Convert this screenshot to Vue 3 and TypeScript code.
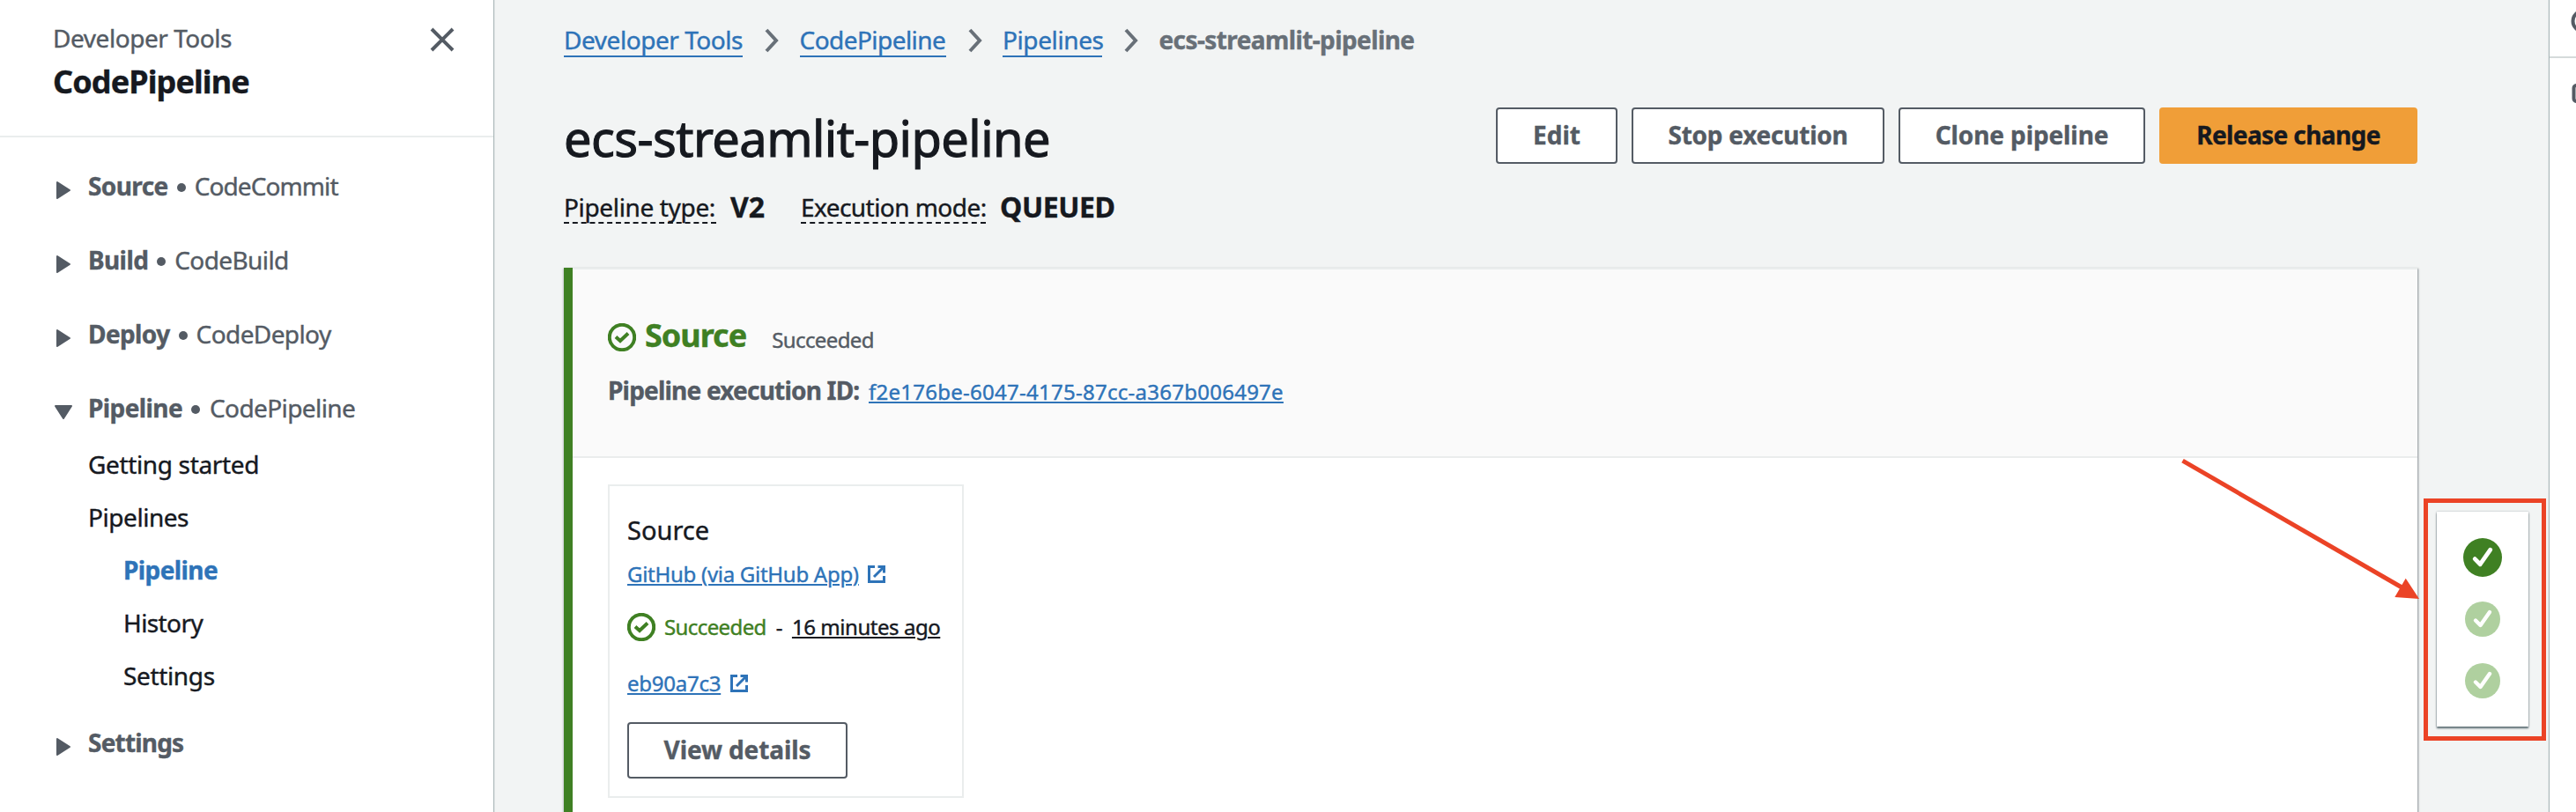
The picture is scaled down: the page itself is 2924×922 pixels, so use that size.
<script setup lang="ts">
interface Group { key: string; title: string; service: string }
interface Child { key: string; label: string; nested?: boolean; active?: boolean }

const groups: Group[] = [
  { key: 'source', title: 'Source', service: 'CodeCommit' },
  { key: 'build', title: 'Build', service: 'CodeBuild' },
  { key: 'deploy', title: 'Deploy', service: 'CodeDeploy' },
]
const children: Child[] = [
  { key: 'getting', label: 'Getting started' },
  { key: 'pipelines', label: 'Pipelines' },
  { key: 'pipeline', label: 'Pipeline', nested: true, active: true },
  { key: 'history', label: 'History', nested: true },
  { key: 'settings', label: 'Settings', nested: true },
]
const crumbs = [
  { key: 'tools', label: 'Developer Tools' },
  { key: 'cp', label: 'CodePipeline' },
  { key: 'list', label: 'Pipelines' },
]
const actions = [
  { key: 'edit', label: 'Edit' },
  { key: 'stop', label: 'Stop execution' },
  { key: 'clone', label: 'Clone pipeline' },
  { key: 'release', label: 'Release change' },
]
const stages = [
  { key: 'one', current: true },
  { key: 'two', current: false },
  { key: 'three', current: false },
]
</script>

<template>
  <div class="page">
    <aside class="sidebar">
      <header class="side-head">
        <div>
          <div class="side-sup">Developer Tools</div>
          <div class="side-title">CodePipeline</div>
        </div>
        <svg class="close" viewBox="0 0 28 28"><path d="M2 2L26 26M26 2L2 26" /></svg>
      </header>
      <nav class="nav">
        <div v-for="g in groups" :key="g.key" class="group" :class="'g-' + g.key">
          <svg class="tri" viewBox="0 0 24 24"><path d="M5 3L19 12L5 21Z" /></svg>
          <b>{{ g.title }}</b><i class="dot"></i><span>{{ g.service }}</span>
        </div>
        <div class="group g-pipe">
          <svg class="tri" viewBox="0 0 24 24"><path d="M3 5H21L12 19Z" /></svg>
          <b>Pipeline</b><i class="dot"></i><span>CodePipeline</span>
        </div>
        <div
          v-for="c in children"
          :key="c.key"
          class="child"
          :class="['c-' + c.key, { nested: c.nested, active: c.active }]"
        ><span>{{ c.label }}</span></div>
        <div class="group g-set">
          <svg class="tri" viewBox="0 0 24 24"><path d="M5 3L19 12L5 21Z" /></svg>
          <b>Settings</b>
        </div>
      </nav>
    </aside>

    <main class="main">
      <div class="crumbs">
        <template v-for="c in crumbs" :key="c.key">
          <a :class="'k-' + c.key">{{ c.label }}</a>
          <svg class="chev" viewBox="0 0 18 28"><path d="M3 2L14 14L3 26" /></svg>
        </template>
        <b class="k-here">ecs-streamlit-pipeline</b>
      </div>

      <div class="title-row">
        <h1>ecs-streamlit-pipeline</h1>
        <div class="actions">
          <button v-for="a in actions" :key="a.key" class="btn" :class="'b-' + a.key">{{ a.label }}</button>
        </div>
      </div>

      <div class="meta">
        <span class="term t-type">Pipeline type:</span><b class="v-type">V2</b>
        <span class="term t-mode">Execution mode:</span><b class="v-mode">QUEUED</b>
      </div>

      <section class="stage">
        <header class="stage-head">
          <div class="stage-title">
            <svg class="ok" viewBox="0 0 32 32"><circle cx="16" cy="16" r="14.2" /><path d="M9 15.5L14 20L23 11.5" /></svg>
            <h2>Source</h2>
            <span class="stage-status">Succeeded</span>
          </div>
          <div class="exec"><b>Pipeline execution ID:</b><a>f2e176be-6047-4175-87cc-a367b006497e</a></div>
        </header>
        <div class="stage-body">
          <article class="action">
            <div class="a-name">Source</div>
            <div class="a-link l-git">
              <a>GitHub (via GitHub App)</a>
              <svg class="ext" viewBox="0 0 20 20"><path d="M8 1.5H1.5V18.5H18.5V12M7 13L18 2M11.5 1.5H18.5V8.5" /></svg>
            </div>
            <div class="a-status">
              <svg class="ok" viewBox="0 0 32 32"><circle cx="16" cy="16" r="14.2" /><path d="M9 15.5L14 20L23 11.5" /></svg>
              <span class="s-ok">Succeeded</span><span class="s-dash">-</span><span class="s-time">16 minutes ago</span>
            </div>
            <div class="a-link l-sha">
              <a>eb90a7c3</a>
              <svg class="ext" viewBox="0 0 20 20"><path d="M8 1.5H1.5V18.5H18.5V12M7 13L18 2M11.5 1.5H18.5V8.5" /></svg>
            </div>
            <button class="btn b-view">View details</button>
          </article>
        </div>
      </section>

      <div class="progress">
        <svg v-for="s in stages" :key="s.key" class="step" :class="{ current: s.current }" viewBox="0 0 40 40">
          <circle cx="20" cy="20" r="20" />
          <path d="M12 21.5L17.5 27L28 12" />
        </svg>
      </div>
      <div class="callout"></div>
      <svg class="arrow" viewBox="0 0 276 164">
        <path class="shaft" d="M3.5 3.2L254 148" />
        <path class="tip" d="M256.7 136.7L244.3 158L272 160Z" />
      </svg>
    </main>

    <aside class="tools">
      <div class="tool first">
        <svg viewBox="0 0 28 28"><circle cx="14" cy="14" r="11.5" /></svg>
      </div>
      <div class="tool second">
        <svg viewBox="0 0 28 28"><rect x="3.5" y="3" width="24" height="18" rx="3" /></svg>
      </div>
    </aside>
  </div>
</template>

<style>
body { margin: 0; overflow: hidden; }
</style>

<style scoped>
* { box-sizing: border-box; }
.page {
  display: flex; width: 2924px; height: 922px; overflow: hidden;
  background: #f2f4f4; color: #16191f;
  font: 28px/40px "Noto Sans", "Open Sans", sans-serif; white-space: nowrap;
  letter-spacing: -0.6px;
  -webkit-text-stroke: 0.4px currentColor;
}
a { color: #2e73b8; }
.sidebar { width: 560px; flex: none; background: #fff; box-shadow: 1px 0 1px #aab7b8; color: #545b64; position: relative; }
.side-head { height: 156px; padding: 23px 44px 0 60px; display: flex; justify-content: space-between; border-bottom: 2px solid #eaeded; }
.side-sup { letter-spacing: -0.45px; }
.side-title { font-size: 36px; font-weight: 700; line-height: 48px; margin-top: 6px; color: #16191f; letter-spacing: -0.9px; }
.close { width: 28px; height: 28px; margin-top: 8px; fill: none; stroke: #545b64; stroke-width: 4; }
.nav { padding: 35px 0 0 60px; }
.group { display: flex; align-items: center; height: 40px; margin-bottom: 44px; }
.tri { width: 24px; height: 24px; margin: 9px 16px 0 0; fill: #545b64; stroke: #545b64; stroke-width: 2; stroke-linejoin: round; }
.dot { width: 10px; height: 10px; border-radius: 5px; background: #545b64; margin: 4px 10px 0 10px; }
.g-source span { letter-spacing: -0.9px; }
.g-pipe { margin-bottom: 24px; }
.g-pipe .dot { margin-right: 11px; }
.child { height: 40px; padding-left: 40px; margin-bottom: 20px; color: #16191f; }
.child.nested { padding-left: 80px; }
.child.active { color: #2e73b8; font-weight: 700; }
.c-getting, .c-settings { letter-spacing: -0.35px; }
.c-pipelines { letter-spacing: -0.45px; }
.g-set { margin-top: 36px; letter-spacing: -0.8px; }
.main { flex: 1; position: relative; padding: 0 150px 0 80px; }
.crumbs { display: flex; align-items: center; height: 40px; margin-top: 25px; color: #687078; }
.crumbs a { height: 40px; border-bottom: 2px solid #2e73b8; }
.k-tools { width: 203px; letter-spacing: -0.45px; }
.k-cp { width: 166px; letter-spacing: -0.55px; }
.k-list { width: 113px; letter-spacing: -0.4px; }
.chev { width: 18px; height: 28px; margin: 2px 22.5px 0 24px; fill: none; stroke: #687078; stroke-width: 4; }
.title-row { display: flex; justify-content: space-between; height: 64px; margin-top: 57px; }
h1 { margin: 2px 0 0; font-size: 56px; line-height: 64px; font-weight: 400; letter-spacing: -0.58px; -webkit-text-stroke-width: 1.1px; }
.actions { display: flex; gap: 16px; }
.btn {
  height: 64px; padding: 0 0 2px; background: #fff; border: 2px solid #545b64; border-radius: 4px;
  font: 700 28px/40px "Noto Sans", "Open Sans", sans-serif; color: #545b64; letter-spacing: 0;
}
.b-edit { width: 138px; }
.b-stop { width: 287px; letter-spacing: -0.25px; }
.b-clone { width: 280px; letter-spacing: -0.1px; }
.b-release { width: 293px; background: #f09e38; border-color: #f09e38; color: #16191f; letter-spacing: -0.6px; }
.meta { display: flex; height: 40px; margin-top: 29px; }
.term { height: 39px; border-bottom: 2px dashed #16191f; }
.t-type { width: 173px; letter-spacing: -0.35px; }
.t-mode { width: 210px; letter-spacing: -0.55px; }
.meta b { font-size: 32px; margin-left: 16px; letter-spacing: -0.4px; }
.meta .v-type { width: 80px; letter-spacing: 0; }
.stage { height: 640px; margin-top: 49px; border-left: 10px solid #3f8023; background: #fff; box-shadow: 1px 1px 2px rgba(84,91,100,.65), -1px 1px 2px rgba(84,91,100,.25); }
.stage-head { height: 216px; padding: 51px 0 0 40px; background: #fafafa; border-top: 2px solid #eaeded; border-bottom: 2px solid #eaeded; color: #545b64; }
.stage-title { display: flex; align-items: center; height: 48px; color: #3f8023; }
.ok { width: 32px; height: 32px; fill: none; stroke: #3f8023; stroke-width: 4; flex: none; }
.stage-title .ok { margin-top: 4px; }
h2 { margin: 0 29px 0 10px; font-size: 36px; line-height: 48px; letter-spacing: -1px; }
.stage-status { color: #545b64; font-size: 24px; padding-top: 10px; }
.exec { display: flex; align-items: baseline; height: 40px; margin-top: 18px; }
.exec b { width: 286px; letter-spacing: -0.8px; }
.exec a, .a-link a, .s-time { font-size: 24px; text-decoration: underline 2px; text-underline-offset: 2px; }
.exec a { margin-left: 10px; letter-spacing: 0.26px; }
.stage-body { padding: 30px 40px; }
.action { width: 404px; height: 356px; border: 2px solid #eaeded; padding: 29px 20px 0; }
.a-name { height: 42px; line-height: 42px; font-size: 29px; letter-spacing: 0; margin-bottom: 9px; }
.a-link, .a-status { display: flex; align-items: center; height: 40px; font-size: 24px; }
.l-git a { width: 262px; letter-spacing: -0.28px; }
.l-sha a { width: 106px; letter-spacing: -0.25px; }
.ext { width: 20px; height: 20px; margin-left: 11px; fill: none; stroke: #2e73b8; stroke-width: 3; }
.a-status { margin: 20px 0 24px; }
.s-ok { color: #3f8023; margin-left: 10px; }
.s-dash { margin: 0 11px; }
.s-time { letter-spacing: -0.45px; }
.b-view { width: 250px; margin-top: 24px; letter-spacing: -0.1px; }
.progress {
  position: absolute; left: 2206px; top: 581px; width: 104px; height: 244px; background: #fff;
  display: flex; flex-direction: column; align-items: center; padding-top: 30px; gap: 30px;
  box-shadow: 0 2px 2px rgba(0,28,36,.6), 0 0 2px rgba(0,28,36,.3);
}
.step { width: 40px; height: 40px; flex: none; }
.step.current { width: 44px; height: 44px; margin-bottom: -2px; }
.step circle { fill: #afd09f; }
.step.current circle { fill: #3f8023; }
.step path { fill: none; stroke: #fff; stroke-width: 4.4; stroke-linejoin: round; stroke-linecap: round; }
.callout { position: absolute; left: 2191px; top: 566px; width: 139px; height: 275px; border: 5px solid #eb4326; }
.arrow { position: absolute; left: 1914px; top: 520px; width: 276px; height: 164px; }
.shaft { fill: none; stroke: #eb4326; stroke-width: 5; }
.tip { fill: #eb4326; }
.tools { width: 30px; flex: none; background: #fff; box-shadow: -1px 0 1px #aab7b8; overflow: hidden; position: relative; }
.tool svg { width: 28px; height: 28px; margin-left: 24px; fill: none; stroke: #545b64; stroke-width: 4; display: block; }
.first { height: 66px; padding-top: 10px; border-bottom: 2px solid #d5dbdb; }
.second { padding-top: 28px; }
</style>
